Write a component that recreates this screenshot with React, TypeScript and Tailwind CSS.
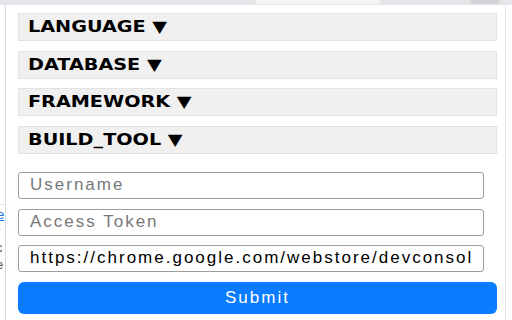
const sections = ["LANGUAGE", "DATABASE", "FRAMEWORK", "BUILD_TOOL"]

function Section({ label, last }: { label: string; last?: boolean }) {
  return (
    <div
      className={`h-[28px] w-[479px] bg-[#f0f0f0] border border-[#e3e3e3] flex items-center pl-[9px] ${last ? "" : "mb-[9.5px]"}`}
    >
      <span className="inline-block origin-left scale-x-[1.2] font-['DejaVu_Sans',sans-serif] font-bold text-[16px] text-black leading-none whitespace-nowrap">
        {label} ▼
      </span>
    </div>
  )
}

export default function App() {
  return (
    <div className="w-[512px] h-[320px] overflow-hidden bg-white relative font-['Liberation_Sans',Arial,sans-serif]">
      {/* browser strip */}
      <div className="h-[5px] bg-[#e4e6e9] flex">
        <div className="ml-[255px] w-[125px] h-[4px] bg-[#f3f4f5] rounded-b-full" />
        <div className="ml-[90px] w-[30px] h-[4px] bg-[#d2d4d7] rounded-b-full" />
      </div>
      <div className="flex h-[315px]">
        {/* page behind popup */}
        <div className="w-[6px] border-r border-[#dcdcdc] overflow-hidden text-[13px] leading-none">
          <div className="h-[200px] border-b border-[#e6e6e6] mb-[3px]" />
          <div className="text-[#1a73e8] underline -ml-[3px]">e</div>
          <div className="text-[#1a73e8] mt-[2px] -ml-[4px]">•</div>
          <div className="text-[#555] mt-[5px] -ml-[4px]">c</div>
          <div className="text-[#555] mt-[4px] -ml-[4px]">e</div>
        </div>
        {/* popup */}
        <div className="flex-1 pt-[8px] pl-[12px]">
          {sections.map((s, i) => (
            <Section key={s} label={s} last={i === sections.length - 1} />
          ))}
          <form className="mt-[18px] flex flex-col">
            <input
              placeholder="Username"
              className="w-[466px] h-[27px] border border-[#9e9e9e] rounded-[3px] px-[11px] text-[17px] tracking-[2px] text-black placeholder:text-[#777] outline-none"
            />
            <input
              placeholder="Access Token"
              className="mt-[10px] w-[466px] h-[27px] border border-[#9e9e9e] rounded-[3px] px-[11px] text-[17px] tracking-[2px] text-black placeholder:text-[#777] outline-none"
            />
            <input
              defaultValue="https://chrome.google.com/webstore/devconsol"
              className="mt-[9px] w-[466px] h-[27px] border border-[#9e9e9e] rounded-[3px] px-[11px] text-[17px] tracking-[2px] text-black outline-none"
            />
            <button
              type="button"
              className="mt-[10px] w-[479px] h-[32px] bg-[#0a7cff] rounded-[6px] text-white text-[17px] tracking-[2px]"
            >
              Submit
            </button>
          </form>
        </div>
        <div className="w-[7px] border-l border-[#e8e8e8]" />
      </div>
    </div>
  )
}
